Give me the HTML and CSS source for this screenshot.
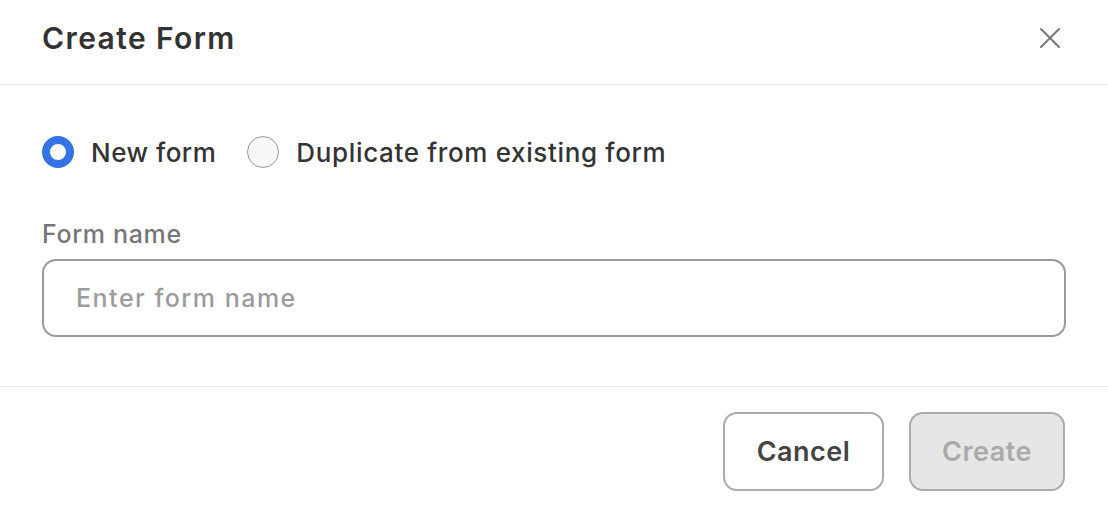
FILE: index.html
```html
<!DOCTYPE html>
<html lang="en">
<head>
<meta charset="utf-8">
<title>Create Form</title>
<link rel="stylesheet" href="styles.css">
</head>
<body>
<div class="modal">
  <header class="modal-header">
    <h1 class="title">Create Form</h1>
    <button class="close" aria-label="Close">
      <svg width="24" height="24" viewBox="0 0 24 24"><path d="M3 3 L21 21 M21 3 L3 21" stroke="#777" stroke-width="2" stroke-linecap="round" fill="none"/></svg>
    </button>
  </header>
  <section class="modal-body">
    <div class="radios">
      <label class="radio-option"><span class="radio checked"></span><span class="radio-text">New form</span></label>
      <label class="radio-option"><span class="radio"></span><span class="radio-text dup">Duplicate from existing form</span></label>
    </div>
    <div class="field-label">Form name</div>
    <div class="input"><span class="placeholder">Enter form name</span></div>
  </section>
  <footer class="modal-footer">
    <button class="btn btn-cancel">Cancel</button>
    <button class="btn btn-create">Create</button>
  </footer>
</div>
</body>
</html>
```
FILE: styles.css
```css
* { box-sizing: border-box; }
html, body { margin: 0; padding: 0; background: #fff; }
body { font-family: "Inter", "Open Sans", sans-serif; color: #333; width: 1108px; height: 506px; overflow: hidden; }
.modal { display: flex; flex-direction: column; height: 506px; }
.modal-header {
  height: 85px;
  display: flex; align-items: center; justify-content: space-between;
  padding: 0 46px 9px 42px;
  border-bottom: 1px solid #e4e4e4;
}
.title { margin: 0; font-size: 30px; font-weight: 600; color: #333; letter-spacing: 1.4px; }
.close { border: 0; background: none; padding: 0; width: 24px; height: 24px; display: flex; }
.modal-body { padding: 51px 42px 49px; border-bottom: 1px solid #e4e4e4; }
.radios { display: flex; align-items: center; gap: 31px; height: 32px; }
.radio-option { display: flex; align-items: center; gap: 17px; }
.radio {
  width: 32px; height: 32px; border-radius: 50%;
  border: 1.5px solid #999; background: #f7f7f7; flex: none;
}
.radio.checked { border: 8px solid #3474e6; background: #fff; }
.radio-text { font-size: 26px; font-weight: 500; color: #333; letter-spacing: 0.5px; }
.radio-text.dup { letter-spacing: 0.65px; }
.field-label { margin-top: 54px; font-size: 25px; line-height: 24px; font-weight: 500; color: #777; letter-spacing: 0.65px; }
.input {
  margin-top: 13px; height: 78px;
  border: 2px solid #9a9a9a; border-radius: 14px;
  display: flex; align-items: center; padding: 0 32px;
}
.placeholder { font-size: 25px; font-weight: 500; color: #9c9c9c; letter-spacing: 1.5px; }
.modal-footer { display: flex; justify-content: flex-end; gap: 25px; padding: 25px 43px 0; }
.btn {
  height: 79px; border-radius: 14px; border: 2px solid #ababab;
  font-family: inherit; font-size: 27px; font-weight: 600; letter-spacing: 0.5px;
}
.btn-cancel { width: 161px; background: #fff; color: #444; }
.btn-create { width: 156px; background: #e6e6e6; color: #aaa; }
```
